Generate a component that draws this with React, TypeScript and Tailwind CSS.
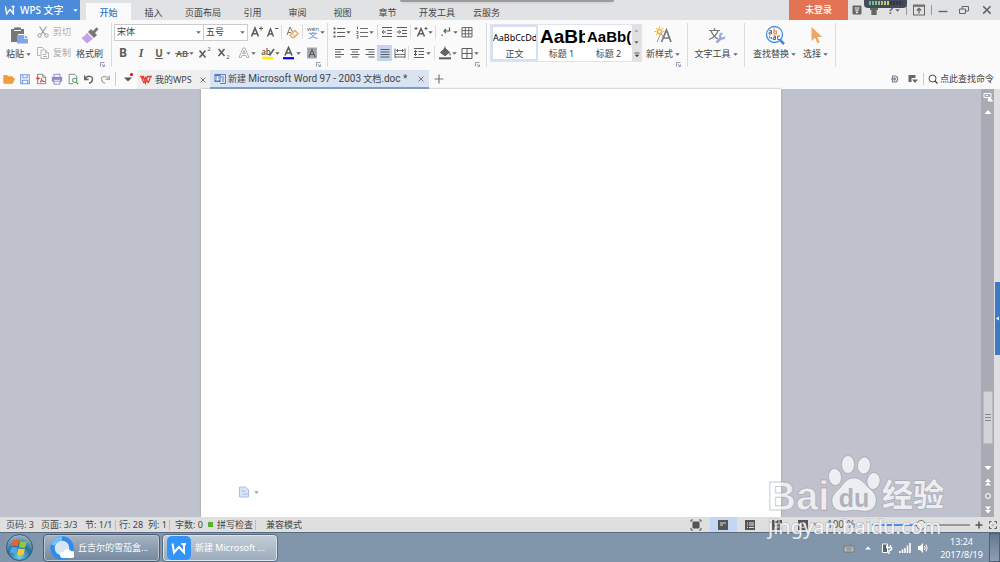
import type { ReactNode } from 'react';
import clsx from 'clsx';

type Box = { children?: ReactNode; className?: string };

const menuTabs = [
  { name: '开始', width: 'w-[45px]' },
  { name: '插入', width: 'w-[45px]' },
  { name: '页面布局', width: 'w-[54px]' },
  { name: '引用', width: 'w-[45px]' },
  { name: '审阅', width: 'w-[45px]' },
  { name: '视图', width: 'w-[45px]' },
  { name: '章节', width: 'w-[45px]' },
  { name: '开发工具', width: 'w-[54px]' },
  { name: '云服务', width: 'w-[45px]' },
];

const styles = [
  { name: '正文', sample: 'AaBbCcDd', look: 'text-[9px]' },
  { name: '标题 1', sample: 'AaBb', look: "font-['Liberation_Sans',sans-serif] text-[19px] font-bold" },
  { name: '标题 2', sample: 'AaBb(', look: "font-['Liberation_Sans',sans-serif] text-[15px] font-bold" },
];

/* ---------- small pieces ---------- */

function Icon({ children, className = 'size-3.5', box = 14 }: Box & { box?: number }) {
  return (
    <svg viewBox={`0 0 ${box} ${box}`} className={clsx('shrink-0', className)} fill="none" stroke="currentColor" aria-hidden="true">
      {children}
    </svg>
  );
}

function Caret({ className = 'text-[#666]' }: { className?: string }) {
  return (
    <svg viewBox="0 0 5 5" className={clsx('size-[5px] shrink-0', className)} aria-hidden="true">
      <path d="M0.3 1.2h4.4L2.5 3.8z" fill="currentColor" />
    </svg>
  );
}

function Tool({ label, width, caret, active, children }: { label: string; width: string; caret?: boolean; active?: boolean; children: ReactNode }) {
  return (
    <button type="button" aria-label={label} className={clsx('flex h-4 shrink-0 items-center justify-center text-[#5c5c5c]', width, active && 'bg-[#c3d5ef]')}>
      {children}
      {caret && <Caret />}
    </button>
  );
}

function BigTool({ label, caret, className, children }: Box & { label: string; caret?: boolean }) {
  return (
    <button type="button" className={clsx('flex shrink-0 flex-col items-center', className)}>
      <span className="flex h-[23px] items-center">{children}</span>
      <span className="flex h-4 items-center gap-0.5 whitespace-nowrap">
        {label}
        {caret && <Caret />}
      </span>
    </button>
  );
}

function Sep() {
  return <span className="mx-px h-3.5 w-px shrink-0 bg-[#dcdcdc]" />;
}

function Group({ children, className, launcher }: Box & { launcher?: boolean }) {
  return (
    <section className={clsx('relative flex h-11 shrink-0 border-r border-[#dcdcdc]', className)}>
      {children}
      {launcher && (
        <button type="button" aria-label="更多设置" className="absolute right-1.5 bottom-0 text-[#7c86a5]">
          <Icon className="size-[5px]" box={5}>
            <path d="M.5 4.5v-4h4M2.5 4.5h2v-2M2 2l2 2" strokeWidth=".8" />
          </Icon>
        </button>
      )}
    </section>
  );
}

/* ---------- title bar ---------- */

function TitleBar() {
  return (
    <header className="relative flex h-5 items-stretch bg-[#e1e2e4]">
      <button type="button" className="flex w-20 shrink-0 items-center bg-[#4a8bdc] pl-1 text-[10px] font-medium text-white">
        <Icon className="mr-1 h-2.5 w-3" box={12}>
          <path d="M0.5 1.5L2 10.5L6 5.5L10 10.5V2.5M8 1.8h3.5" strokeWidth="1.7" />
        </Icon>
        <span className="flex-1 text-left whitespace-nowrap">WPS 文字</span>
        <span className="mr-0.5"><Caret className="text-white" /></span>
      </button>
      <nav className="ml-1.5 flex">
        {menuTabs.map((tab, i) => (
          <button
            key={tab.name}
            type="button"
            className={clsx('mt-[3px] shrink-0 pt-0.5 leading-3', tab.width, i === 0 ? 'bg-[#fafafa] font-medium text-[#2f74c8]' : 'text-[#444]')}
          >
            {tab.name}
          </button>
        ))}
      </nav>
      <div className="ml-auto flex items-center text-[#666]">
        <button type="button" className="h-full w-[59px] bg-[#e27353] font-medium text-white">未登录</button>
        <button type="button" aria-label="云" className="flex w-[18px] justify-center">
          <Icon className="size-2.5" box={10}>
            <rect x=".5" y=".5" width="9" height="9" rx="1" fill="currentColor" stroke="none" />
            <path d="M2.5 3h5M3 5h4M5 5v3M3.8 7L5 8.2L6.2 7" stroke="#eee" />
          </Icon>
        </button>
        <button type="button" aria-label="皮肤" className="flex w-4 justify-center">
          <Icon className="size-2.5" box={10}>
            <path d="M1 2l2-1h4l2 1v3H7.7v5H2.3V5H1z" fill="currentColor" stroke="none" />
          </Icon>
        </button>
        <button type="button" aria-label="帮助" className="flex w-6 items-center justify-center gap-0.5 text-[11px] font-bold">
          ?<Caret />
        </button>
        <span className="h-2.5 w-px bg-[#999]" />
        <button type="button" aria-label="隐藏功能区" className="flex w-6 justify-center">
          <Icon className="size-3" box={12}>
            <rect x=".5" y="1" width="11" height="10" />
            <path d="M.5 2h11M6 9.5V5M3.8 6.5L6 4.3L8.2 6.5" strokeWidth="1.3" />
          </Icon>
        </button>
        <span className="h-2.5 w-px bg-[#999]" />
        <button type="button" aria-label="最小化" className="flex w-[22px] justify-center">
          <Icon className="size-2.5" box={10}><path d="M.5 6.5h9" strokeWidth="1.4" /></Icon>
        </button>
        <button type="button" aria-label="还原" className="flex w-5 justify-center">
          <Icon className="size-2.5" box={10}><path d="M.5 4h6v4.5h-6zM3 4V1.5h6.5v4.5H6.5" /></Icon>
        </button>
        <button type="button" aria-label="关闭" className="flex w-[26px] justify-center">
          <Icon className="size-2.5" box={10}><path d="M1.2 1.2l7.4 7.4M8.6 1.2L1.2 8.6" strokeWidth="1.6" /></Icon>
        </button>
      </div>
      {/* edges of windows docked above the screen */}
      <div className="absolute top-0 left-[40%] h-0.5 w-[214px] rounded-b bg-[#9b9b9c] shadow-sm" />
      <div className="absolute top-0 right-[93px] flex h-2 w-[43px] items-start rounded-b bg-[#454b5b] px-1 pt-px">
        <span className="h-1 flex-1 bg-[repeating-linear-gradient(90deg,#454b5b_0px,#454b5b_1px,transparent_1px,transparent_3px),linear-gradient(90deg,#55b8a3,#d6cb5c_60%,#30384a_60%)]" />
      </div>
    </header>
  );
}

/* ---------- ribbon ---------- */

const textFill = { fill: 'currentColor', stroke: 'none' } as const;

function Ribbon() {
  return (
    <div className="flex h-[49px] items-start overflow-hidden bg-[#fafafa] pt-[3px] text-[#444]">
      <Group launcher className="w-28">
        <BigTool label="粘贴" caret className="ml-1.5">
          <Icon className="size-[18px]" box={18}>
            <path d="M1 3h3V1.5h2.5a1.5 1.5 0 012 0H11V3h3v5H8v8H1z" fill="#777" stroke="none" />
            <path d="M4 4.5h7" stroke="#fafafa" />
            <path d="M7 9h8l3 3v5.5H7z" fill="#80a5ea" stroke="none" />
            <path d="M14.5 9v3.5H18" stroke="#fafafa" strokeWidth=".8" />
          </Icon>
        </BigTool>
        <div className="ml-1.5 flex flex-col gap-[5px] pt-px text-[#aaa]">
          <button type="button" className="flex h-4 items-center gap-1 whitespace-nowrap">
            <Icon className="size-3" box={12}>
              <path d="M2.5 .5l5.5 8M9.5 .5l-5.5 8" stroke="#999" strokeWidth="1.2" />
              <circle cx="2.5" cy="9.5" r="1.7" stroke="#999" />
              <circle cx="9.5" cy="9.5" r="1.7" stroke="#999" />
            </Icon>
            剪切
          </button>
          <button type="button" className="flex h-4 items-center gap-1 whitespace-nowrap">
            <Icon className="size-3" box={12}>
              <path d="M3.5 8.5h-3v-8h5l2 2M4 3h4.5l3 3v5.5H4zM8.5 3v3h3M6 7.5h3M6 9.5h4" stroke="#b5b5b5" />
            </Icon>
            复制
          </button>
        </div>
        <BigTool label="格式刷" className="ml-[5px]">
          <Icon className="size-[18px]" box={18}>
            <path d="M7 6l3-3 6 6-3 3z" fill="#777" stroke="none" />
            <path d="M11.5 5.5L15.5 1.2l2 2L13.5 7.5z" fill="#777" stroke="none" />
            <path d="M6 6.8L12 12.8C10 14 8 16 6 17.5L0.5 12C3 10.5 5 9 6 6.8z" fill="#c8a0ea" stroke="none" />
          </Icon>
        </BigTool>
      </Group>

      <Group launcher className="w-[216px] flex-col gap-[5px] pt-px pl-0.5">
        <div className="flex h-4 items-center">
          <label className="relative flex h-[17px] w-[90px] items-center border border-[#ccc] bg-white">
            <select aria-label="字体" defaultValue="宋体" className="h-full w-full appearance-none pl-0.5 outline-none">
              <option>宋体</option>
            </select>
            <span className="pointer-events-none absolute right-0.5"><Caret /></span>
          </label>
          <label className="relative flex h-[17px] w-11 items-center border border-l-0 border-[#ccc] bg-white">
            <select aria-label="字号" defaultValue="五号" className="h-full w-full appearance-none pl-0.5 outline-none">
              <option>五号</option>
            </select>
            <span className="pointer-events-none absolute right-0.5"><Caret /></span>
          </label>
          <Tool label="增大字号" width="w-[17px]">
            <Icon>
              <path d="M1.5 11.5L5 3L8.500 11.5M2.700 8.800h4.600" strokeWidth="1.6" />
              <path d="M9 3.5h4M11 1.5v4" />
            </Icon>
          </Tool>
          <Tool label="减小字号" width="w-[15px]">
            <Icon>
              <path d="M1.5 11.5L4.500 4L7.5 11.5M2.500 9h4" strokeWidth="1.4" />
              <path d="M9 3.5h3.5" />
            </Icon>
          </Tool>
          <Sep />
          <Tool label="清除格式" width="w-[18px]">
            <Icon>
              <path d="M2 10L5 2l2.5 5M3 7.5h3" stroke="#777" />
              <path d="M10 5.5l3 3-4 4H7L5 10.3z" stroke="#eda35c" strokeWidth="1.3" />
              <path d="M7 8.5l3 3" stroke="#eda35c" />
            </Icon>
          </Tool>
          <Sep />
          <Tool label="拼音指南" width="w-[22px]" caret>
            <Icon>
              <text x="7" y="6" textAnchor="middle" fontSize="6" {...textFill}>wén</text>
              <path d="M3 8.300h8M7 7v1.300M4.5 8.500C6 11 8 12.800 11.500 13.5M9.5 8.500C8 11 6 12.800 2.5 13.5" stroke="#6a97dc" />
            </Icon>
          </Tool>
        </div>
        <div className="flex h-4 items-center">
          <Tool label="加粗" width="w-[18px]"><span className="text-[12px] font-bold">B</span></Tool>
          <Tool label="倾斜" width="w-[18px]"><span className="font-['Liberation_Serif',serif] text-[12px] font-bold italic">I</span></Tool>
          <Tool label="下划线" width="w-[23px]" caret><span className="w-3.5 text-[10px] font-bold underline">U</span></Tool>
          <Tool label="删除线" width="w-[22px]" caret>
            <Icon>
              <text x="7" y="10.5" textAnchor="middle" fontSize="9" fontWeight="600" {...textFill}>AB</text>
              <path d="M0 7.5h14" stroke="#d9483b" />
            </Icon>
          </Tool>
          <Tool label="上标" width="w-[19px]">
            <Icon>
              <path d="M1.500 4.500l6 7M7.500 4.500l-6 7" strokeWidth="1.6" />
              <text x="11" y="5" textAnchor="middle" fontSize="6" {...textFill}>2</text>
            </Icon>
          </Tool>
          <Tool label="下标" width="w-5">
            <Icon>
              <path d="M1.500 3l6 7M7.500 3l-6 7" strokeWidth="1.6" />
              <text x="11" y="13" textAnchor="middle" fontSize="6" {...textFill}>2</text>
            </Icon>
          </Tool>
          <Tool label="文字效果" width="w-[25px]" caret>
            <Icon><path d="M2 11.5L6 2h2l4 9.5H9.8L9 9.5H5L4.2 11.5zM5.8 7.5h2.4L7 4.5z" stroke="#aaa" strokeWidth=".9" /></Icon>
          </Tool>
          <Tool label="突出显示" width="w-[22px]" caret>
            <Icon>
              <text x="5" y="9" textAnchor="middle" fontSize="8" fontWeight="600" {...textFill}>ab</text>
              <path d="M8.500 9.5L13 3" strokeWidth="1.6" />
              <path d="M1 12h11" stroke="#fbf100" strokeWidth="2.4" />
            </Icon>
          </Tool>
          <Tool label="字体颜色" width="w-5" caret>
            <Icon>
              <path d="M3 9.5L6.5 1.5L10 9.5M4 7h5" strokeWidth="1.6" />
              <path d="M1 12.2h11" stroke="#0000f5" strokeWidth="2.2" />
            </Icon>
          </Tool>
          <Tool label="字符底纹" width="w-[22px]">
            <Icon>
              <rect x="2" y="1.5" width="10" height="11" fill="#a5a8ad" stroke="none" />
              <path d="M4 11L7 3.5L10 11M5 8.5h4" strokeWidth="1.2" />
            </Icon>
          </Tool>
        </div>
      </Group>

      <Group launcher className="w-[159px] flex-col gap-[5px] pt-px pl-0.5">
        <div className="flex h-4 items-center">
          <Tool label="项目符号" width="w-[22px]" caret>
            <Icon><path d="M5 3.5h8M5 7.5h8M5 11.5h8" /><path d="M1.5 3.5h2M1.5 7.5h2M1.5 11.5h2" strokeWidth="2" /></Icon>
          </Tool>
          <Tool label="编号" width="w-6" caret>
            <Icon><path d="M5 3.5h8M5 7.5h8M5 11.5h8M2.5 1.5v3M1.5 6.5h1.5v2h-1.5M1.5 10.5h1.5v2.5h-1.5" strokeWidth=".9" /></Icon>
          </Tool>
          <Sep />
          <Tool label="减少缩进" width="w-[15px]">
            <Icon><path d="M2 2.5h10M7 5.5h5M7 8.5h5M2 11.5h10M6 7H2M3.8 5.2L2 7l1.8 1.8" /></Icon>
          </Tool>
          <Tool label="增加缩进" width="w-[15px]">
            <Icon><path d="M2 2.5h10M7 5.5h5M7 8.5h5M2 11.5h10M1.5 7h4M4 5.2L5.8 7L4 8.8" /></Icon>
          </Tool>
          <Sep />
          <Tool label="中文版式" width="w-[22px]" caret>
            <Icon><path d="M3.5 11.5L7 3.5L10.5 11.5M4.7 8.8h4.6" strokeWidth="1.5" /><path d="M.5 3.5h3M2 2v3M10.5 3.5h3M12 2v3" /></Icon>
          </Tool>
          <Sep />
          <Tool label="换行" width="w-[22px]" caret>
            <Icon><path d="M10.5 2.5v3.5H5M7 4L5 6l2 2M3 9.5v1.5" strokeWidth="1.2" /></Icon>
          </Tool>
          <Tool label="表格" width="w-[15px]">
            <Icon><path d="M2 2.5h10v9.5H2zM5.3 2.5V12M8.7 2.5V12M2 5.6h10M2 8.8h10" strokeWidth=".9" /></Icon>
          </Tool>
        </div>
        <div className="flex h-4 items-center pl-0.5">
          <Tool label="左对齐" width="w-[15px]"><Icon><path d="M2 3.5h9M2 6h6M2 8.5h9M2 11h6" /></Icon></Tool>
          <Tool label="居中" width="w-[15px]"><Icon><path d="M2.5 3.5h9M4 6h6M2.5 8.5h9M4 11h6" /></Icon></Tool>
          <Tool label="右对齐" width="w-[15px]"><Icon><path d="M2.5 3.5h9M5.5 6h6M2.5 8.5h9M5.5 11h6" /></Icon></Tool>
          <Tool label="两端对齐" width="w-[15px]" active><Icon><path d="M2.5 3.5h9M2.5 6h9M2.5 8.5h9M2.5 11h9" /></Icon></Tool>
          <Tool label="分散对齐" width="w-[15px]">
            <Icon><path d="M2 2.5v9.5M12 2.5v9.5M3.5 4.5h7M5 3L3.5 4.5L5 6M9 3l1.5 1.5L9 6M2 8.5h10M2 11h10" strokeWidth=".9" /></Icon>
          </Tool>
          <Sep />
          <Tool label="行距" width="w-[23px]" caret>
            <Icon><path d="M2 2.5h10M6.5 5.5h5.5M6.5 8.5h5.5M2 11.5h10M3.5 4.5v5M2 6l1.5-1.5L5 6M2 8l1.5 1.5L5 8" /></Icon>
          </Tool>
          <Sep />
          <Tool label="底纹颜色" width="w-[22px]" caret>
            <Icon>
              <path d="M2.5 6.5L7 2.2l4.5 4-4.5 3.6zM7 .5v3M12 7v2.5" fill="#666" />
              <path d="M1 12.3h12" strokeWidth="2" />
            </Icon>
          </Tool>
          <Tool label="边框" width="w-[22px]" caret>
            <Icon><path d="M2 2.5h10v10H2zM7 2.5v10M2 7.5h10" /></Icon>
          </Tool>
        </div>
      </Group>

      <Group launcher className="w-[201px] items-start pl-[3px]">
        <div className="mt-px flex h-[38px] border border-[#e0e3ea] bg-white">
          {styles.map((s, i) => (
            <button
              key={s.name}
              type="button"
              className={clsx('flex w-[47px] flex-col items-center overflow-hidden', i === 0 && 'border-2 border-[#d3e0f5]')}
            >
              <span className={clsx('flex w-full items-center overflow-hidden leading-5 whitespace-nowrap text-black', i === 0 ? 'h-[22px]' : 'h-6 px-0.5', s.look)}>
                {s.sample}
              </span>
              <span className="leading-[10px]">{s.name}</span>
            </button>
          ))}
          <div className="flex w-[9px] flex-col justify-around bg-[#e1e1e3]">
            <button type="button" aria-label="上一行" className="flex justify-center"><span className="rotate-180"><Caret className="text-[#aaa]" /></span></button>
            <button type="button" aria-label="下一行" className="flex justify-center"><Caret /></button>
            <button type="button" aria-label="全部样式" className="flex justify-center">
              <Icon className="size-1.5" box={6}><path d="M.5 1h5M1.500 3h3L3 4.800z" fill="currentColor" strokeWidth=".8" /></Icon>
            </button>
          </div>
        </div>
        <BigTool label="新样式" caret className="ml-1">
          <Icon className="size-[18px]" box={18}>
            <path d="M7.5 16L12.5 4L17 16M9 12h6.5" stroke="#777" strokeWidth="1.7" />
            <path d="M3 16L7 7l2 4" stroke="#999" />
            <circle cx="5.5" cy="5.5" r="2.2" stroke="#f0b24c" strokeWidth="1.5" fill="#fff3c4" />
            <path d="M5.5 .5v1.5M5.5 9v1.5M.5 5.5H2M9 5.5h1.5M2 2l1 1M9 2L8 3M2 9l1-1" stroke="#f0b24c" />
          </Icon>
        </BigTool>
      </Group>

      <Group className="w-[57px] justify-center">
        <BigTool label="文字工具" caret>
          <Icon className="size-[18px]" box={18}>
            <path d="M2 4.5h11M7.5 2v2.5M4 5C6 9.5 8 11.5 11 13M11 5C9 10 6 12 2 13.5" stroke="#777" strokeWidth="1.2" />
            <path d="M9.5 16.5l5-5" stroke="#96a8dc" strokeWidth="2.6" />
            <path d="M15.5 7.5a2.5 2.5 0 102.5 3" stroke="#96a8dc" strokeWidth="2" />
          </Icon>
        </BigTool>
      </Group>

      <Group className="w-[91px] gap-[7px] pl-2">
        <BigTool label="查找替换" caret>
          <Icon className="size-5" box={20}>
            <circle cx="9.5" cy="9.5" r="8" stroke="#3f8be0" strokeWidth="1.3" />
            <path d="M15 15l4 4" stroke="#3f8be0" strokeWidth="2.5" />
            {/* "ab" over "ac", drawn as bowls and stems */}
            <path d="M4.500 5.500h2v3.500h-2.300v-1.800h2.300" stroke="#666" />
            <path d="M9 3.500v5.500h2.300v-3H9" stroke="#e98b3c" strokeWidth="1.200" />
            <path d="M8.500 11h2v3.500h-2.300v-1.800h2.300M15 11h-2.300v3.500H15" stroke="#56688a" />
            <path d="M4.5 10.5v2.500h2.500M6 12l1 1-1 1" stroke="#3f8be0" strokeWidth=".9" />
          </Icon>
        </BigTool>
        <BigTool label="选择" caret>
          <Icon className="size-[18px]" box={18}>
            <path d="M4.5 1v14l3.5-3.2 2.5 5.4 2.3-1-2.5-5.2h5z" fill="#f0a565" stroke="none" />
          </Icon>
        </BigTool>
      </Group>
    </div>
  );
}

/* ---------- quick access and document tabs ---------- */

const quickTools = [
  { name: '打开', icon: <path d="M1 12V3h4l1 1.5h5v2H4L1.5 12H11l2.5-5.5H4.5" fill="#f2a044" stroke="#ee9230" /> },
  { name: '保存', icon: <path d="M2 2h10v10.5H2zM4.5 2v3.5h5V2M4 12.5V8.5h6v4" stroke="#6b9ae6" strokeWidth="1.2" /> },
  { name: '输出为PDF', icon: <><path d="M3 1.5h6l3.500 3.500v7.500H3zM9 1.5V5h3.5" stroke="#777" /><path d="M1 6h5M3.5 4.5v4M6 11c2-2 2-4 1.5-5 0 3 2 4 4 4" stroke="#dc3f39" strokeWidth="1.2" /></> },
  { name: '打印', icon: <><path d="M3.5 4.5v-3h7v3M3.5 9v4h7V9z" stroke="#7d78bd" /><path d="M1 4.5h12v5.5H1z" fill="#8d89c9" stroke="none" /><path d="M3.5 8.5h7" stroke="#fff" /></> },
  { name: '打印预览', icon: <><path d="M7 12.5H2.5v-11h6L11.5 4v3" stroke="#777" /><circle cx="9" cy="8.5" r="2.5" stroke="#4fa863" strokeWidth="1.2" /><path d="M10.8 10.5l2.2 2.5" stroke="#4fa863" strokeWidth="1.5" /></> },
  { name: '撤销', icon: <path d="M2 3v4.5h4.5M2.5 7C5 2.5 12 3 11 8c-.4 2-2 3.5-4 4" stroke="#666" strokeWidth="1.7" /> },
  { name: '恢复', icon: <path d="M12 3v4.5H7.5M11.5 7C9 2.5 2 3 3 8c.4 2 2 3.5 4 4" stroke="#aaa" strokeWidth="1.5" /> },
];

function TabBar() {
  return (
    <div className="flex h-5 items-center bg-[#fafafa] text-[#444]">
      <div className="flex items-center pl-px">
        {quickTools.map((t) => (
          <button key={t.name} type="button" aria-label={t.name} className="flex w-4 justify-center">
            <Icon className="size-3">{t.icon}</Icon>
          </button>
        ))}
      </div>
      <span className="mx-0.5 h-3.5 w-px bg-[#ccc]" />
      <button type="button" aria-label="自定义快速访问" className="relative flex w-[19px] justify-center">
        <Icon className="size-2" box={8}><path d="M0 2.5h8L4 6.5z" fill="#555" stroke="none" /></Icon>
        <span className="absolute -top-0.5 right-1 size-[3px] rounded-full bg-red-600" />
      </button>
      <div className="flex h-[19px] w-[73px] items-center self-end bg-[#efeff0] pl-[3px]">
        <Icon className="mr-[3px] h-3 w-3" box={12}>
          <path d="M0 2.500h3.500L5.500 9l2-6.500H12M3.800 9L6 2.500M3.500 3l-.8 2M8.300 9L10.500 3M5.800 3.500L8.300 9M1.500 3L3.800 9" stroke="#e0463f" strokeWidth="1.300" />
        </Icon>
        <span className="flex-1 whitespace-nowrap">我的WPS</span>
        <button type="button" aria-label="关闭 我的WPS" className="mr-1 text-[#777]">
          <Icon className="size-1.5" box={6}><path d="M.5 .5l5 5M5.5 .5l-5 5" /></Icon>
        </button>
      </div>
      <div className="flex h-[19px] w-[219px] items-center self-end border-b-2 border-[#6fa0e0] bg-[#d9e3f1] pl-1">
        <Icon className="mr-0.5 size-3" box={12}>
          <path d="M4 1.5h7.5v9H6M6.5 4h3.5M8 6h2M8 8h2" stroke="#6080b8" />
          <path d="M.5 1h6v8h-6z" fill="#5478b8" stroke="none" />
          <path d="M2 3v4h3V3M3.5 3v4" stroke="#fff" strokeWidth=".9" />
        </Icon>
        <span className="flex-1 font-['Roboto','Noto_Sans_CJK_SC',sans-serif] whitespace-nowrap">
          新建 <span className="text-[10px]">Microsoft Word 97 - 2003</span> 文档<span className="text-[10px]">.doc *</span>
        </span>
        <button type="button" aria-label="关闭文档" className="mr-[5px] text-[#777]">
          <Icon className="size-1.5" box={6}><path d="M.5 .5l5 5M5.5 .5l-5 5" /></Icon>
        </button>
      </div>
      <button type="button" aria-label="新建标签" className="ml-[5px] text-[#777]">
        <Icon className="size-2.5" box={10}><path d="M5 .5v9M.5 5h9" strokeWidth="1.2" /></Icon>
      </button>
      <div className="ml-auto flex items-center">
        <button type="button" aria-label="文档" className="mr-[9px]">
          <Icon className="size-2" box={8}><path d="M1.500 1h2.500C7.500 1 7.500 7 4 7H1.500zM0 4h4M3 2.500L4.500 4L3 5.500" stroke="#777f90" strokeWidth="1.200" /></Icon>
        </button>
        <button type="button" aria-label="窗口" className="mr-[5px]">
          <Icon className="size-2.5" box={10}><path d="M.5 1h7v3H3.5v4h-3z" fill="#666" stroke="none" /><path d="M4 5.5h6L7 9z" fill="#666" stroke="none" /></Icon>
        </button>
        <span className="mr-1 h-3 w-px bg-[#ccc]" />
        <button type="button" className="mr-1.5 flex items-center gap-0.5 whitespace-nowrap">
          <Icon className="size-2.5" box={10}><circle cx="4.5" cy="4.5" r="3.5" /><path d="M7 7l2.5 2.5" strokeWidth="1.3" /></Icon>
          点此查找命令
        </button>
      </div>
    </div>
  );
}

/* ---------- document area ---------- */

function Watermark() {
  return (
    <svg viewBox="0 0 190 92" className="pointer-events-none absolute right-12 bottom-5 z-10 h-[92px] w-[190px]" role="img" aria-label="Baidu 经验">
      <g fill="#fff" fillOpacity=".72" stroke="#888c96" strokeOpacity=".45">
        <text x="5" y="60" fontSize="40" fontWeight="700" className="font-['Liberation_Sans',sans-serif]">Bai</text>
        <ellipse cx="73" cy="27" rx="6.500" ry="8.500" transform="rotate(-8 73 27)" />
        <ellipse cx="86" cy="14.500" rx="6.500" ry="9" />
        <ellipse cx="102" cy="15.500" rx="6.500" ry="8.500" transform="rotate(8 102 15.500)" />
        <ellipse cx="111.500" cy="31" rx="6.500" ry="8.500" transform="rotate(8 111.500 31)" />
        <path d="M92 28c7 0 10 5 15 10 5 4 8 8 7 14-1 8-8 10-14 9-5-1-10-1-15 0-7 1-14-1-15-9-1-6 4-10 8-14 4-5 7-10 14-10z" />
      </g>
      <text x="120" y="56" fontSize="31" fontWeight="700" fill="#eceef2" stroke="#9a9ea8" strokeOpacity=".6" strokeWidth="1.500" paintOrder="stroke" className="font-['Noto_Sans_CJK_SC',sans-serif]">经验</text>
      <text x="92" y="57" textAnchor="middle" fontSize="25" fontWeight="700" fill="#b0b3bd" className="font-['Liberation_Sans',sans-serif]">du</text>
      <text x="6" y="84" fontSize="20" fill="#fff" fillOpacity=".85" stroke="#8d929c" strokeOpacity=".3" strokeWidth="2" paintOrder="stroke">jingyan.baidu.com</text>
    </svg>
  );
}

function Workspace() {
  return (
    <main className="flex min-h-0 flex-1 bg-[#bfc2cc]">
      <div className="flex flex-1 justify-center">
        <article className="flex w-[580px] max-w-full flex-col justify-end bg-white pb-[19px] pl-[37px] shadow-[0_0_2px_#999]">
          <button type="button" aria-label="粘贴选项" className="flex items-center gap-1 self-start">
            <Icon className="size-3" box={12}>
              <path d="M1.5 1h6l3 3v7h-9z" fill="#dbe4f6" stroke="#a9bde4" />
              <path d="M3.5 5h4M4.5 8h5" stroke="#a9bde4" />
            </Icon>
            <Caret className="text-[#999]" />
          </button>
        </article>
      </div>
      <aside aria-label="垂直滚动条" className="flex w-[13px] flex-col items-center gap-1.5 bg-[#a9aab4] py-[3px] text-white">
        <Icon className="size-2.5" box={10}><path d="M1 1.5h7v4H1zM3 3.5h2" /><path d="M6 5l3.5 4H5z" fill="currentColor" /></Icon>
        <Icon className="size-2" box={8}><path d="M.5 6h7L4 2z" fill="currentColor" stroke="none" /></Icon>
        <div className="mt-auto mb-3.5 flex h-[53px] w-2.5 flex-col items-center justify-center gap-0.5 border border-[#bbb] bg-[#d2d3d6]">
          <span className="h-px w-1.5 bg-[#888]" />
          <span className="h-px w-1.5 bg-[#888]" />
          <span className="h-px w-1.5 bg-[#888]" />
        </div>
        <Icon className="size-2" box={8}><path d="M.5 2h7L4 6z" fill="currentColor" stroke="none" /></Icon>
        <Icon className="size-2" box={8}><path d="M1 4L4 .5L7 4zM1 7.5L4 4L7 7.5z" fill="currentColor" stroke="none" /></Icon>
        <Icon className="size-2" box={8}><circle cx="4" cy="4" r="2.5" /></Icon>
        <Icon className="size-2" box={8}><path d="M1 .5L4 4L7 .5zM1 4L4 7.5L7 4zM1 .8h6" fill="currentColor" stroke="none" /></Icon>
      </aside>
      <div className="flex w-1.5 flex-col items-end justify-center bg-[#dfdfe2] pt-[30px]">
        <button type="button" aria-label="展开任务窗格" className="flex h-[73px] w-[5px] items-center bg-[#3b7ac9] text-white">
          <Icon className="size-[5px]" box={5}><path d="M4 .5v4L1 2.5z" fill="currentColor" stroke="none" /></Icon>
        </button>
      </div>
    </main>
  );
}

/* ---------- status bar ---------- */

function StatusBar() {
  return (
    <footer className="flex h-[15px] items-center bg-[#dfdfe0] pl-1.5 whitespace-nowrap text-[#444]">
      <span className="w-[35px]">页码: 3</span>
      <span className="w-11">页面: 3/3</span>
      <span className="w-[30px]">节: 1/1</span>
      <span className="mr-[3px] h-2.5 w-px bg-[#bbb]" />
      <span className="w-[29px]">行: 28</span>
      <span className="w-[21px]">列: 1</span>
      <span className="mr-[5px] h-2.5 w-px bg-[#bbb]" />
      <span className="w-[33px]">字数: 0</span>
      <span className="mr-1 size-[5px] bg-[#57b12f]" />
      <span>拼写检查</span>
      <span className="mr-2.5 ml-0.5 h-2.5 w-px bg-[#bbb]" />
      <span>兼容模式</span>
      <div className="ml-auto flex h-full items-center text-[#555]">
        <button type="button" aria-label="全屏显示" className="flex w-[27px] justify-center">
          <Icon className="size-3" box={12}><path d="M1 3V1h2M9 1h2v2M11 9v2H9M3 11H1V9" /><path d="M3 3h6v6H3z" fill="currentColor" /></Icon>
        </button>
        <button type="button" aria-label="页面视图" className="flex h-full w-[27px] items-center justify-center bg-[#c4d7f2]">
          <Icon className="size-3" box={12}><path d="M1 1h10v10H1z" fill="currentColor" stroke="none" /><path d="M3 4h6M3 6h3" stroke="#ddd" /></Icon>
        </button>
        <button type="button" aria-label="大纲视图" className="flex w-[27px] justify-center">
          <Icon className="size-3" box={12}><path d="M1 1h10v10H1z" fill="currentColor" stroke="none" /><path d="M3 4h1M5 4h5M3 6h1M5 6h5M3 8.5h1M5 8.5h5" stroke="#ddd" /></Icon>
        </button>
        <button type="button" aria-label="Web版式" className="flex w-[27px] justify-center">
          <Icon className="size-3" box={12}><path d="M1 1h10v10H1z" fill="currentColor" stroke="none" /><path d="M4 1v4h4V1M4 11V8h4" stroke="#ddd" /></Icon>
        </button>
        <button type="button" aria-label="护眼模式" className="flex w-[30px] items-center justify-center gap-1 pl-1">
          <Icon className="size-3" box={12}><path d="M1 1h10v10H1z" fill="currentColor" stroke="none" /><circle cx="6" cy="6" r="2.5" stroke="#ddd" /></Icon>
          <Caret />
        </button>
        <button type="button" className="ml-1.5 flex items-center gap-1 text-[10px]">100 %<Caret /></button>
        <input
          type="range"
          aria-label="显示比例"
          defaultValue={50}
          className="mr-[5px] ml-2 h-3 w-[98px] appearance-none bg-transparent [&::-webkit-slider-runnable-track]:h-0.5 [&::-webkit-slider-runnable-track]:bg-[linear-gradient(90deg,#4a8ee6_50%,#999_50%)] [&::-webkit-slider-thumb]:-mt-1 [&::-webkit-slider-thumb]:size-2.5 [&::-webkit-slider-thumb]:appearance-none [&::-webkit-slider-thumb]:rounded-full [&::-webkit-slider-thumb]:border [&::-webkit-slider-thumb]:border-[#777] [&::-webkit-slider-thumb]:bg-[#eee]"
        />
        <button type="button" aria-label="放大" className="mr-1.5"><Icon className="size-2" box={8}><path d="M4 .5v7M.5 4h7" strokeWidth="1.5" /></Icon></button>
        <button type="button" aria-label="适应窗口" className="mr-[3px]">
          <Icon className="size-2" box={8}><path d="M.5 2.5v-2h2M5.5 .5h2v2M7.5 5.5v2h-2M2.5 7.5h-2v-2M3.500 4h1" /></Icon>
        </button>
      </div>
    </footer>
  );
}

/* ---------- system taskbar ---------- */

function Taskbar() {
  return (
    <div className="flex h-[30px] items-center border-t border-[#596b80] bg-[#8195ab] text-white">
      <button type="button" aria-label="开始菜单" className="mr-2.5 ml-1.5">
        <Icon className="size-[27px]" box={27}>
          <defs>
            <radialGradient id="orb" cx=".5" cy=".85" r=".85">
              <stop offset="0" stopColor="#6fd4ee" />
              <stop offset=".5" stopColor="#26709c" />
              <stop offset="1" stopColor="#a6bccc" />
            </radialGradient>
          </defs>
          <circle cx="13.5" cy="13.5" r="13" fill="url(#orb)" stroke="#3c5570" />
          <g stroke="none" transform="translate(-2.700 -2.700) scale(1.200)">
            <path d="M8 7.5c2-1 3.500-1 5.200 0L12 12.5c-1.800-1-3.500-.8-5.200 0z" fill="#e8642c" />
            <path d="M14.2 8c1.800 1 3.500 1 5.500 0l-1.300 5.200c-1.800.8-3.500.7-5.300-.3z" fill="#94c83d" />
            <path d="M6.5 13.7c1.800-.9 3.500-.9 5.200 0l-1.300 5c-1.700-1-3.400-1-5.200 0z" fill="#52a7e0" />
            <path d="M12.800 14.2c1.800 1 3.500 1 5.300.2l-1.300 5c-1.900.9-3.500.8-5.300-.2z" fill="#fbc934" />
          </g>
        </Icon>
      </button>
      <button type="button" className="mr-0.5 flex h-7 w-[117px] items-center gap-1 rounded-sm border border-[#4b5d73] bg-linear-to-b from-[#a7b4c3] to-[#74889f] pl-1.5 whitespace-nowrap shadow-[inset_0_0_0_1px_#b8c3d0]">
        <Icon className="size-6" box={24}>
          <circle cx="12" cy="12" r="9.5" stroke="#318bea" strokeWidth="4.5" fill="#d8e6f3" />
          <path d="M3 9a9.5 9.5 0 019-6.5" stroke="#73c0fa" strokeWidth="4.5" />
          <path d="M13 22a3 3 0 010-6 4.5 4.5 0 018-1 3.5 3.5 0 011 7z" fill="#fff" stroke="none" />
        </Icon>
        丘吉尔的雪茄盒...
      </button>
      <button type="button" className="flex h-7 w-[116px] items-center gap-1 rounded-sm border border-[#5c6d82] bg-linear-to-b from-[#c5ced8] to-[#9aabbc] pl-1 whitespace-nowrap shadow-[inset_0_0_0_1px_#dce2e9]">
        <Icon className="size-6" box={24}>
          <rect width="24" height="24" rx="5" fill="#3294fa" stroke="none" />
          <path d="M5.5 7.5l1.500 9 5-5.500 5 5.500V8M14.5 8h4.500" stroke="#fff" strokeWidth="2" />
        </Icon>
        新建 Microsoft ...
      </button>
      <div className="ml-auto flex items-center">
        <Icon className="mr-2.5 size-3" box={12}>
          <path d="M1 4h10v6H1zM6 4c0-2 2-1 2-3" fill="#c3c5c6" stroke="#77797b" />
          <path d="M2.5 6h7M3.5 8h5" stroke="#777" />
        </Icon>
        <Icon className="mr-2.5 size-1.5" box={6}><path d="M0 4.5h6L3 1.5z" fill="#fff" stroke="none" /></Icon>
        <Icon className="mr-1.5 size-3" box={12}>
          <path d="M1.5 2h5v8.5h-5z" fill="#566" />
          <path d="M6 3v2M9.5 3v2M5 5.5h5.500v2L8 9v3" strokeWidth="1.4" />
        </Icon>
        <Icon className="mr-1.5 size-3" box={12}><path d="M1 11V9M3.5 11V7.5M6 11V6M8.5 11V3.5M11 11V1" strokeWidth="1.6" /></Icon>
        <Icon className="size-3" box={12}>
          <path d="M1 4h2l3-3v10L3 8H1z" fill="#fff" stroke="none" />
          <path d="M7.5 4q1.200 2 0 4M9 2.5q2.400 3.500 0 7" />
        </Icon>
        <time className="w-[57px] pl-2 text-center leading-[13px]">13:24<br />2017/8/19</time>
        <button type="button" aria-label="显示桌面" className="ml-[3px] h-[29px] w-[11px] border border-[#4e6074] bg-linear-to-b from-[#65788d] to-[#8da0b3]" />
      </div>
    </div>
  );
}

export default function App() {
  return (
    <div className="relative flex h-screen flex-col overflow-hidden font-['Noto_Sans','Noto_Sans_CJK_SC',sans-serif] text-[9px]">
      <TitleBar />
      <Ribbon />
      <TabBar />
      <Workspace />
      <StatusBar />
      <Taskbar />
      <Watermark />
    </div>
  );
}
